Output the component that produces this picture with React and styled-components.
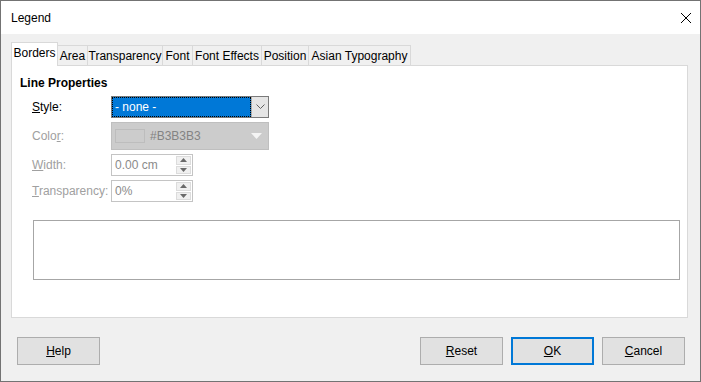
import React from 'react';
import styled, { createGlobalStyle } from 'styled-components';

const Global = createGlobalStyle`
  html, body { margin: 0; padding: 0; background: #fff; }
  body { font-family: "Liberation Sans", Arial, sans-serif; font-size: 12px; color: #000; }
`;

const Window = styled.div`
  width: 701px;
  height: 382px;
  box-sizing: border-box;
  border: 1px solid #737373;
  background: #f0f0f0;
  display: flex;
  flex-direction: column;
`;

const TitleBar = styled.div`
  height: 33px;
  background: #fff;
  display: flex;
  align-items: center;
  justify-content: space-between;
  padding: 0 8px 0 10px;
  flex-shrink: 0;
`;

const Title = styled.span`
  font-size: 12px;
  color: #000;
`;

const Body = styled.div`
  flex: 1;
  display: flex;
  flex-direction: column;
  padding: 8px 12px 15px 10px;
`;

const TabStrip = styled.div`
  display: flex;
  align-items: flex-end;
  height: 24px;
  margin-bottom: -1px;
  position: relative;
  z-index: 1;
`;

const Tab = styled.div`
  box-sizing: border-box;
  width: ${p => p.$w}px;
  height: ${p => (p.$active ? 24 : 21)}px;
  margin-left: ${p => (p.$first ? 0 : -1)}px;
  border: 1px solid #d9d9d9;
  border-bottom: ${p => (p.$active ? 'none' : '1px solid #d9d9d9')};
  background: ${p => (p.$active ? '#fff' : '#f0f0f0')};
  display: flex;
  align-items: center;
  justify-content: center;
  padding-top: ${p => (p.$active ? 0 : 1)}px;
  padding-bottom: ${p => (p.$active ? 3 : 0)}px;
  white-space: nowrap;
  color: #000;
`;

const Panel = styled.div`
  box-sizing: border-box;
  height: 253px;
  background: #fff;
  border: 1px solid #d9d9d9;
  padding: 9px 7px 0 8px;
  display: flex;
  flex-direction: column;
`;

const Heading = styled.div`
  font-weight: bold;
  line-height: 16px;
`;

const Form = styled.div`
  display: grid;
  grid-template-columns: 79px auto;
  justify-content: start;
  align-items: center;
  row-gap: 4px;
  margin: 5px 0 0 12px;
`;

const Label = styled.span`
  color: ${p => (p.$disabled ? '#a0a0a0' : '#000')};
  white-space: nowrap;
`;

const U = styled.span`
  text-decoration: underline;
`;

const Select = styled.div`
  box-sizing: border-box;
  width: 158px;
  height: 22px;
  border: 1px solid #7a7a7a;
  display: flex;
  background: #fff;
`;

const SelectValue = styled.div`
  flex: 1;
  background: #0078d7;
  color: #fff;
  outline: 1px dotted #000;
  outline-offset: -1px;
  display: flex;
  align-items: center;
  padding-left: 3px;
`;

const SelectButton = styled.div`
  width: 16px;
  background: #e5e5e5;
  border-left: 1px solid #adadad;
  display: flex;
  align-items: center;
  justify-content: center;
`;

const ColorBox = styled.div`
  box-sizing: border-box;
  width: 158px;
  height: 28px;
  background: #cccccc;
  border: 1px solid #bfbfbf;
  display: flex;
  align-items: center;
  padding: 0 6px 0 3px;
  color: #838383;
`;

const Swatch = styled.div`
  width: 28px;
  height: 12px;
  border: 1px solid #bdbdbd;
  background: #cccccc;
  margin-right: 5px;
`;

const Spin = styled.div`
  box-sizing: border-box;
  width: 82px;
  height: 22px;
  background: #fff;
  border: 1px solid #c4c4c4;
  display: flex;
  color: #8a8a8a;
`;

const SpinText = styled.div`
  flex: 1;
  display: flex;
  align-items: center;
  padding-left: 3px;
`;

const SpinButtons = styled.div`
  width: 15px;
  display: flex;
  flex-direction: column;
  padding: 1px 1px 1px 0;
  gap: 1px;
`;

const SpinArrow = styled.div`
  flex: 1;
  background: #f0f0f0;
  border: 1px solid #dcdcdc;
  display: flex;
  align-items: center;
  justify-content: center;
`;

const Preview = styled.div`
  height: 58px;
  margin: 18px 0 0 13px;
  background: #fff;
  border: 1px solid #a6a6a6;
`;

const ButtonRow = styled.div`
  display: flex;
  gap: 8px;
  margin-top: 19px;
  padding: 0 3px 0 6px;
`;

const Spacer = styled.div`
  flex: 1;
`;

const Button = styled.button`
  box-sizing: border-box;
  width: 83px;
  height: 28px;
  margin: 0;
  padding: 0;
  font-family: inherit;
  font-size: 12px;
  color: #000;
  background: #e1e1e1;
  border: ${p => (p.$default ? '2px solid #0078d7' : '1px solid #adadad')};
`;

const Chevron = () => (
  <svg width="9" height="6" viewBox="0 0 9 6">
    <path d="M0.5 0.5 L4.5 4.5 L8.5 0.5" fill="none" stroke="#606060" strokeWidth="1" />
  </svg>
);

const Tri = ({ up }) => (
  <svg width="7" height="4" viewBox="0 0 7 4">
    <path d={up ? 'M0 4 L3.5 0 L7 4 Z' : 'M0 0 L3.5 4 L7 0 Z'} fill="#6a6a6a" />
  </svg>
);

const SpinField = ({ value }) => (
  <Spin>
    <SpinText>{value}</SpinText>
    <SpinButtons>
      <SpinArrow><Tri up /></SpinArrow>
      <SpinArrow><Tri /></SpinArrow>
    </SpinButtons>
  </Spin>
);

const tabs = [
  ['Borders', 47],
  ['Area', 31],
  ['Transparency', 76],
  ['Font', 31],
  ['Font Effects', 70],
  ['Position', 48],
  ['Asian Typography', 103],
];

export default function App() {
  return (
    <>
      <Global />
      <Window>
        <TitleBar>
          <Title>Legend</Title>
          <svg width="12" height="12" viewBox="0 0 12 12">
            <path d="M1 1 L11 11 M11 1 L1 11" stroke="#000" strokeWidth="1" />
          </svg>
        </TitleBar>
        <Body>
          <TabStrip>
            {tabs.map(([name, w], i) => (
              <Tab key={name} $w={w} $first={i === 0} $active={i === 0}>{name}</Tab>
            ))}
          </TabStrip>
          <Panel>
            <Heading>Line Properties</Heading>
            <Form>
              <Label><U>S</U>tyle:</Label>
              <Select>
                <SelectValue>- none -</SelectValue>
                <SelectButton><Chevron /></SelectButton>
              </Select>

              <Label $disabled>Colo<U>r</U>:</Label>
              <ColorBox>
                <Swatch />
                <span>#B3B3B3</span>
                <Spacer />
                <svg width="11" height="6" viewBox="0 0 11 6">
                  <path d="M0 0 L11 0 L5.5 6 Z" fill="#f4f4f4" />
                </svg>
              </ColorBox>

              <Label $disabled><U>W</U>idth:</Label>
              <SpinField value="0.00 cm" />

              <Label $disabled><U>T</U>ransparency:</Label>
              <SpinField value="0%" />
            </Form>
            <Preview />
          </Panel>
          <ButtonRow>
            <Button><U>H</U>elp</Button>
            <Spacer />
            <Button><U>R</U>eset</Button>
            <Button $default><U>O</U>K</Button>
            <Button><U>C</U>ancel</Button>
          </ButtonRow>
        </Body>
      </Window>
    </>
  );
}
